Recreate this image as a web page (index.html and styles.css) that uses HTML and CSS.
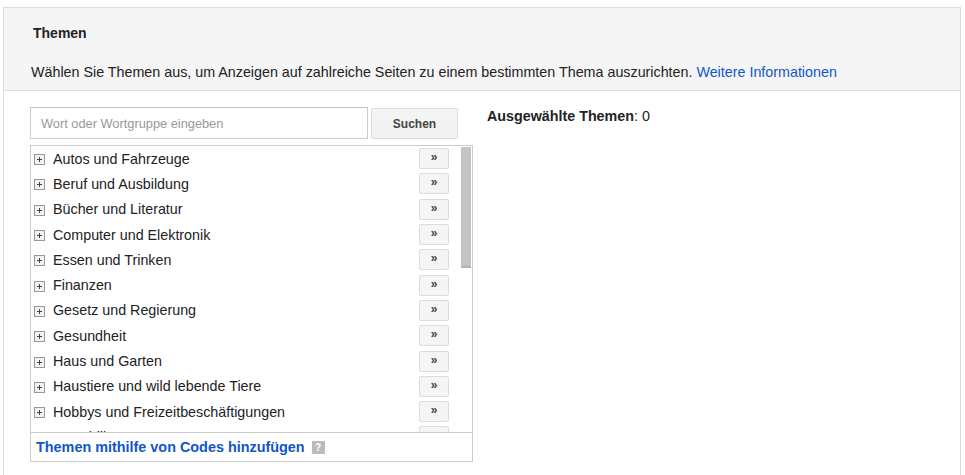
FILE: index.html
```html
<!DOCTYPE html>
<html lang="de">
<head>
  <meta charset="UTF-8">
  <title>Themen</title>
  <link rel="stylesheet" href="styles.css">
</head>
<body>
  <div class="panel">
    <div class="panel-header">
      <h1>Themen</h1>
      <p>Wählen Sie Themen aus, um Anzeigen auf zahlreiche Seiten zu einem bestimmten Thema auszurichten. <a href="#">Weitere Informationen</a></p>
    </div>
    <div class="panel-body">
      <div class="picker">
        <form class="search">
          <input type="text" placeholder="Wort oder Wortgruppe eingeben">
          <button type="button">Suchen</button>
        </form>
        <div class="topics">
          <div class="topics-scroll">
            <ul class="topic-list">
              <li><span class="expand"></span><span class="name">Autos und Fahrzeuge</span><button class="add">»</button></li>
              <li><span class="expand"></span><span class="name">Beruf und Ausbildung</span><button class="add">»</button></li>
              <li><span class="expand"></span><span class="name">Bücher und Literatur</span><button class="add">»</button></li>
              <li><span class="expand"></span><span class="name">Computer und Elektronik</span><button class="add">»</button></li>
              <li><span class="expand"></span><span class="name">Essen und Trinken</span><button class="add">»</button></li>
              <li><span class="expand"></span><span class="name">Finanzen</span><button class="add">»</button></li>
              <li><span class="expand"></span><span class="name">Gesetz und Regierung</span><button class="add">»</button></li>
              <li><span class="expand"></span><span class="name">Gesundheit</span><button class="add">»</button></li>
              <li><span class="expand"></span><span class="name">Haus und Garten</span><button class="add">»</button></li>
              <li><span class="expand"></span><span class="name">Haustiere und wild lebende Tiere</span><button class="add">»</button></li>
              <li><span class="expand"></span><span class="name">Hobbys und Freizeitbeschäftigungen</span><button class="add">»</button></li>
              <li><span class="expand"></span><span class="name">Immobilien</span><button class="add">»</button></li>
              <li><span class="expand"></span><span class="name">Internet und Telekommunikation</span><button class="add">»</button></li>
              <li><span class="expand"></span><span class="name">Kunst und Unterhaltung</span><button class="add">»</button></li>
            </ul>
            <div class="scrollbar"><div class="thumb"></div></div>
          </div>
          <div class="topics-footer">
            <a href="#">Themen mithilfe von Codes hinzufügen</a>
            <span class="help">?</span>
          </div>
        </div>
      </div>
      <div class="selected">
        <strong>Ausgewählte Themen</strong>: 0
      </div>
    </div>
  </div>
</body>
</html>
```

FILE: styles.css
```css
body {
  font-family: Arial, 'Liberation Sans', sans-serif;
  color: #222;
  background-color: #fff;
  margin: 0;
}
a {
  color: #15c;
  text-decoration: none;
}
.panel {
  width: 956px;
  height: 470px;
  margin: 7px 0 0 3px;
  border: 1px solid #ddd;
  border-bottom: none;
}
.panel-header {
  background-color: #f5f5f5;
  border-bottom: 1px solid #ddd;
  padding: 16px 0 9px 29px;
}
.panel-header h1 {
  font-size: 14px;
  font-weight: bold;
  line-height: 18px;
  margin: 0 0 21px 0;
}
.panel-header p {
  font-size: 14.3px;
  line-height: 18px;
  margin: 0 0 0 -2px;
}
.panel-body {
  display: flex;
  gap: 14px;
  padding: 16px 0 0 26px;
}
.picker {
  width: 443px;
}
.search {
  display: flex;
  gap: 3px;
  margin-bottom: 6px;
}
.search input {
  width: 338px;
  height: 32px;
  box-sizing: border-box;
  border: 1px solid #ccc;
  border-top-color: #c0c0c0;
  padding: 0 10px;
  font-family: Arial, 'Liberation Sans', sans-serif;
  font-size: 12.8px;
  color: #222;
  margin: 0;
}
.search input::placeholder {
  color: #999;
}
.search button {
  width: 87px;
  height: 31px;
  margin-top: 1px;
  border: 1px solid #dcdcdc;
  border-radius: 2px;
  background: linear-gradient(#f5f5f5, #f1f1f1);
  font-family: Arial, 'Liberation Sans', sans-serif;
  font-size: 12px;
  font-weight: bold;
  color: #444;
}
.topics {
  border: 1px solid #ccc;
}
.topics-scroll {
  display: flex;
  height: 286px;
}
.topic-list {
  flex: 1;
  list-style-type: none;
  margin: 0;
  padding: 0;
  overflow: hidden;
}
.topic-list li {
  display: flex;
  align-items: center;
  height: 25.3px;
  padding-left: 3px;
  padding-right: 12px;
}
.scrollbar {
  width: 10px;
  padding: 1px 1px 0 0;
}
.thumb {
  height: 121px;
  background-color: #c4c4c4;
  border-bottom: 2px solid #b2b2b2;
  box-sizing: border-box;
}
.expand {
  position: relative;
  width: 9px;
  height: 9px;
  border: 1px solid #999;
  background-color: #f2f2f2;
  margin: 2px 8px 0 0;
  flex-shrink: 0;
}
.expand::before,
.expand::after {
  content: '';
  position: absolute;
  background-color: #444;
}
.expand::before {
  left: 2px;
  top: 4px;
  width: 5px;
  height: 1px;
}
.expand::after {
  left: 4px;
  top: 2px;
  width: 1px;
  height: 5px;
}
.name {
  flex: 1;
  font-size: 14.3px;
  color: #222;
}
.add {
  width: 30px;
  height: 21px;
  padding: 0 0 3px 0;
  border: 1px solid #dcdcdc;
  border-radius: 2px;
  background-color: #f5f5f5;
  font-family: Arial, 'Liberation Sans', sans-serif;
  font-size: 12px;
  font-weight: bold;
  color: #444;
  line-height: 14px;
}
.topics-footer {
  display: flex;
  align-items: center;
  gap: 7px;
  border-top: 1px solid #ccc;
  height: 28px;
  padding-left: 5px;
}
.topics-footer a {
  font-size: 14.4px;
  font-weight: bold;
}
.help {
  width: 13px;
  height: 13px;
  background-color: #bbb;
  color: #fff;
  font-size: 10px;
  font-weight: bold;
  line-height: 13px;
  text-align: center;
}
.selected {
  font-size: 14.3px;
  line-height: 18px;
  color: #222;
}
```
